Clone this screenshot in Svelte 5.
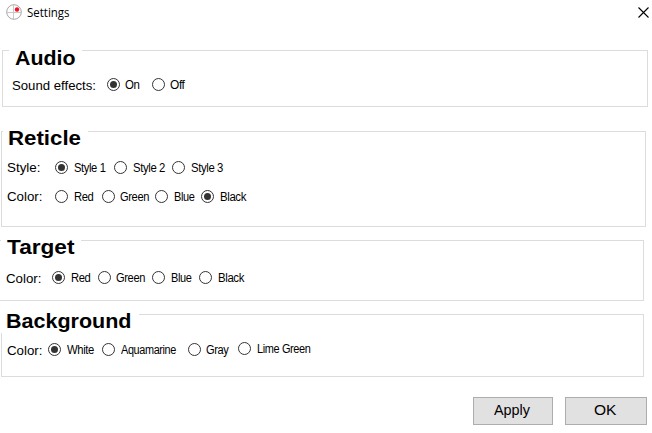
<script>
  // Each option is [label, radio x, text x, text width, vertical shift]
  let groups = $state([
    {
      id: 'audio', title: 'Audio', titleWidth: 60.5,
      rows: [{ label: 'Sound effects:', x: 12, width: 84, selected: 'On', options: [
        ['On', 107, 125, 14.5], ['Off', 152, 170, 14.5]] }]
    },
    {
      id: 'reticle', title: 'Reticle', titleWidth: 73,
      rows: [
        { label: 'Style:', x: 7, width: 33.5, selected: 'Style 1', options: [
          ['Style 1', 55, 73.5, 31.5], ['Style 2', 114, 132.5, 32], ['Style 3', 172, 190.5, 32]] },
        { label: 'Color:', x: 7, width: 35.5, selected: 'Black', options: [
          ['Red', 55, 73.5, 19.5], ['Green', 102, 120, 29], ['Blue', 155, 173.5, 20.5], ['Black', 201, 219.5, 26]] }
      ]
    },
    {
      id: 'target', title: 'Target', titleWidth: 67.5,
      rows: [{ label: 'Color:', x: 6, width: 35.5, selected: 'Red', options: [
        ['Red', 52, 70.5, 19.5], ['Green', 98, 116, 29], ['Blue', 152, 170.5, 20.5], ['Black', 199, 217.5, 26]] }]
    },
    {
      id: 'background', title: 'Background', titleWidth: 125.5,
      rows: [{ label: 'Color:', x: 7, width: 35.5, selected: 'White', options: [
        ['White', 48, 67, 27], ['Aquamarine', 102, 121, 55], ['Gray', 188, 206, 22.5], ['Lime Green', 238, 256.5, 53.5, -1]] }]
    }
  ]);

  function gapBefore(row, i) {
    const prev = row.options[i - 1];
    return row.options[i][1] - (prev ? prev[2] + prev[3] : row.x + row.width);
  }

  // Condenses or widens a run of text to the width of its box
  function fit(node, width) {
    const natural = node.getBoundingClientRect().width;
    node.style.transform = `scaleX(${width / natural})`;
    node.style.marginRight = `${width - natural}px`;
  }
</script>

<div class="window">
  <header>
    <svg class="logo" width="16" height="16" viewBox="0 0 16 16">
      <circle cx="8" cy="8" r="7.3" fill="#fff" stroke="#a6a6a6" stroke-width="1" />
      <path d="M7.5 1v14M1 8.5h14" stroke="#c8c8c8" stroke-width="1" />
      <circle cx="11" cy="5.5" r="2.2" fill="#f01423" />
    </svg>
    <span class="caption" use:fit={42.5}>Settings</span>
    <svg class="close" width="11" height="11" viewBox="0 0 11 11">
      <path d="M.5 .5l10 10M10.5 .5l-10 10" stroke="#000" stroke-width="1.1" />
    </svg>
  </header>

  {#each groups as group}
    <section class={group.id}>
      <h2><span use:fit={group.titleWidth}>{group.title}</span></h2>
      {#each group.rows as row}
        <div class="row" style:margin-left="{row.x}px">
          <div class="name" style:width="{row.width}px"><span use:fit={row.width}>{row.label}</span></div>
          {#each row.options as [text, x, tx, width, dy = 0], i}
            <button
              class="option"
              class:raised={dy < 0}
              role="radio"
              aria-checked={row.selected === text}
              style:margin-left="{gapBefore(row, i)}px"
              onclick={() => (row.selected = text)}
            >
              <svg width="13" height="13" viewBox="0 0 13 13">
                <circle cx="6.5" cy="6.5" r="6" fill="#fff" stroke="#333" />
                {#if row.selected === text}<circle cx="6.5" cy="6.5" r="3.5" fill="#333" />{/if}
              </svg>
              <div class="text" style:width="{width}px" style:margin-left="{tx - x - 13}px">
                <span class="tight" use:fit={width}>{text}</span>
              </div>
            </button>
          {/each}
        </div>
      {/each}
    </section>
  {/each}

  <footer>
    <button class="push apply"><span use:fit={36}>Apply</span></button>
    <button class="push ok"><span use:fit={22.5}>OK</span></button>
  </footer>
</div>

<style>
  :global(body) { margin: 0; background: #fff; overflow: hidden; }
  .window {
    width: 652px; height: 433px; overflow: hidden; box-sizing: border-box;
    display: flex; flex-direction: column; background: #fff; color: #000;
    font-family: "Liberation Sans", Arial, sans-serif;
  }
  svg { display: block; flex: none; }
  span { display: inline-block; white-space: pre; transform-origin: 0 0; }
  header { display: flex; height: 50px; flex: none; }
  .logo { margin: 4px 5px 0 6px; }
  .caption { font: 12px/16px "Open Sans", "Noto Sans", sans-serif; margin-top: 5px; height: 16px; }
  .close { margin: 7px 3px 0 auto; }
  section { box-sizing: border-box; border: 1px solid #dcdcdc; flex: none; }
  h2 {
    margin: -3px 0 0; background: #fff; box-sizing: border-box;
    font-size: 20px; line-height: 20px; height: 20px; font-weight: bold; white-space: nowrap;
  }
  .audio { margin-left: 2px; width: 646px; height: 57px; }
  .audio h2 { margin-left: 6px; width: 73px; padding-left: 6px; }
  .audio .row { transform: translateX(-3px); margin-top: 10px; }
  .reticle { margin: 24px 0 0 1px; width: 645px; height: 96px; }
  .reticle h2 { margin-top: -4px; margin-left: 1px; width: 85px; padding-left: 5px; }
  .reticle .row { transform: translateX(-2px); margin-top: 13px; }
  .reticle .row + .row { margin-top: 16px; }
  .target { margin: 13px 0 0 -1px; width: 645px; height: 61px; }
  .target h2 { margin-top: -4px; margin-left: 1px; width: 80px; padding-left: 6px; }
  .target .row { margin-top: 14px; }
  .background { margin: 13px 0 0 1px; width: 643px; height: 63px; }
  .background h2 { margin-top: -4px; margin-left: -2px; width: 139px; height: 22px; padding-left: 6px; }
  .background .row { transform: translateX(-2px); margin-top: 10px; }
  .row { display: flex; height: 13px; }
  .name { flex: none; font-size: 13px; line-height: 13px; white-space: nowrap; padding-top: 1px; }
  .reticle .name { padding-top: 0; }
  .option {
    display: flex; flex: none; height: 13px; padding: 0; border: 0; background: none;
    font: 12px/13px "Liberation Sans", Arial, sans-serif; color: #000; text-align: left;
  }
  .raised { margin-top: -1px; }
  .text { flex: none; white-space: nowrap; height: 13px; padding-top: 1px; box-sizing: border-box; }
  .tight { letter-spacing: -0.4px; }
  footer { display: flex; gap: 12px; margin: 20px 0 0 473px; }
  .push {
    box-sizing: border-box; height: 28px; padding: 0 0 4px; border: 1px solid #adadad; background: #e1e1e1;
    font: 15px/17px "Liberation Sans", Arial, sans-serif; color: #000; flex: none;
  }
  .apply { width: 80px; padding-right: 3px; }
  .ok { width: 82px; padding-right: 2px; }
</style>
